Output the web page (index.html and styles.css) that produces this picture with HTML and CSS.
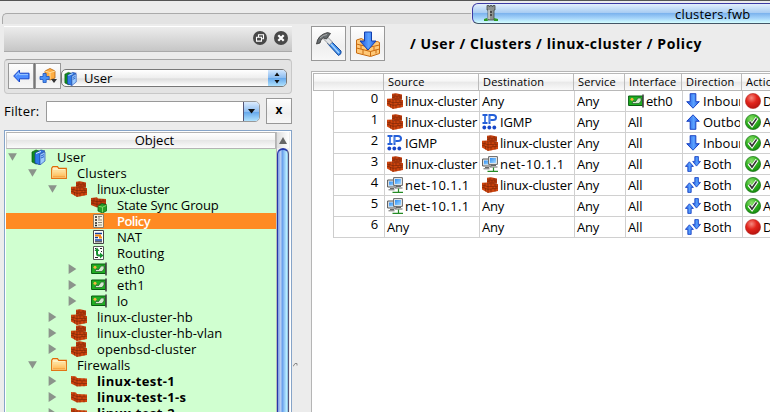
FILE: index.html
```html
<!DOCTYPE html>
<html lang="en"><head><meta charset="utf-8"><title>clusters.fwb</title><link rel="stylesheet" href="styles.css"></head>
<body>
<svg class="defs" width="0" height="0"><defs>
<linearGradient id="blue" x1="0" x2="1"><stop offset="0" stop-color="#1c52dc"/><stop offset=".55" stop-color="#5ba2ff"/><stop offset="1" stop-color="#1d55df"/></linearGradient>
<linearGradient id="gold" x1="0" y1="0" x2="0" y2="1"><stop offset="0" stop-color="#ffe2a0"/><stop offset=".7" stop-color="#ffc366"/><stop offset="1" stop-color="#f08a1c"/></linearGradient>
<linearGradient id="screen" x1="0" y1="0" x2="1" y2="1"><stop offset="0" stop-color="#2b8cf4"/><stop offset="1" stop-color="#a8dcff"/></linearGradient>
<radialGradient id="red" cx=".4" cy=".3" r=".7"><stop offset="0" stop-color="#f58a80"/><stop offset=".5" stop-color="#e2251c"/><stop offset="1" stop-color="#b81410"/></radialGradient>
<radialGradient id="green" cx=".4" cy=".3" r=".7"><stop offset="0" stop-color="#8be06c"/><stop offset=".6" stop-color="#2fb01e"/><stop offset="1" stop-color="#178a10"/></radialGradient>
<symbol id="book" viewBox="0 0 16 16"><path d="M1 3l4-2 3 1v12l-3 1-4-2z" fill="#108a20" stroke="#075c10" stroke-width=".7"/><path d="M4 4l6-3 4 1-5 3v11l-5-2z" fill="#2f7be8" stroke="#1c3f9c" stroke-width=".7"/><path d="M9 5l5-2v9l-5 4z" fill="#9ccbff" stroke="#2450b0" stroke-width=".7"/><path d="M10 7l3-1.4M10 9l3-1.4" stroke="#2a62c8"/><path d="M5 4.5l5-2" stroke="#d8ebff"/></symbol>
<symbol id="folder" viewBox="0 0 16 16"><path d="M.7 13.3V3.2l1.2-1.5h4.6l1.2 1.6h7.6v10z" fill="#fff0c0" stroke="#e06a08" stroke-width="1.2"/><path d="M1.5 5.5h13v7.2h-13z" fill="url(#gold)" stroke="#fbd68c" stroke-width=".6"/></symbol>
<symbol id="wall" viewBox="0 0 16 12"><path d="M0 1l5 .5 1 1.5 10 .5V11l-10 .5-6-3z" fill="#d0450c"/><path d="M0 3.5l6 2 10 .5M0 6l6 2.4 10 .1M3 1.2v3M9 3.5v2.2M13 3.4v2.4M2 4.5V7M11 6v2.5M4 7v3M9 8.4v3M13 8.4v3M6 3v8.4" fill="none" stroke="#76240a" stroke-width=".6"/></symbol>
<symbol id="cluster" viewBox="0 0 16 16"><path d="M5 .8l4-.6 6 1.3v5l-6 1-4-1.5z" fill="#c5400e"/><path d="M5 2.7l4 .6 6-.4M5 4.4l4 1 6-.5M8 .6v2.5M12 1v2.2M10 3.2V5M13 3v2M7 3v2" fill="none" stroke="#782508" stroke-width=".6"/><path d="M0 5.8l5-.4 1 1 10 .6v7l-10 2-6-3.5z" fill="#d0450e"/><path d="M0 8l6 1.7 10-.6M0 10.3l6 2 10-1.2M6 6.5V16M3 6v2.8M2 8.6V11M9 7v2.4M13 7v2.3M11 9.4v2.4M14 9v2.2M9 12v3.3M13 11.6v3M3.5 11.4v3M5 6.6l10 .4" fill="none" stroke="#702207" stroke-width=".6"/></symbol>
<symbol id="group" viewBox="0 0 16 16"><path d="M0 1l6-.7 1 1.2 8 .4v7l-9 1.5L0 8z" fill="#c03c0d"/><path d="M0 3.5l6 1.1 9-.6M0 6l6 1.3 9-.6M3 1v3M9 2v2.2M12 2v2M2 4v2.3M6 2v8M10 4v3" fill="none" stroke="#702207" stroke-width=".6"/><path d="M7 9l4-2.5L16 8v5.5L11.5 16 7 14z" fill="#28a028" stroke="#08631a" stroke-width=".8"/><path d="M7.5 9.2l4 1 4-1.8M11.5 10.2v5" stroke="#9be47c" fill="none" stroke-width=".8"/></symbol>
<symbol id="policy" viewBox="0 0 16 16"><path d="M2.5 1.5h10v13h-10z" fill="#f6f1df" stroke="#8c7d66"/><path d="M4 4h2M4 7h2M4 10h2M4 12.5h2" stroke="#222" stroke-width="1.5"/><path d="M7 3.5h4M7 5h2M7 7h4M7 9.5h4M7 12h4" stroke="#8f8678"/></symbol>
<symbol id="nat" viewBox="0 0 16 16"><path d="M2.5 1.5h10v13h-10z" fill="#fff" stroke="#444"/><path d="M4 4.5h7M4 8.5h3M4 11h7" stroke="#123d9c" stroke-width="1.5"/><path d="M4 6.5h6M8 8.5h3" stroke="#f28a18" stroke-width="1.8"/><path d="M4 12.8h7" stroke="#222"/></symbol>
<symbol id="route" viewBox="0 0 16 16"><path d="M2.5 1.5h10v13h-10z" fill="#fff" stroke="#555"/><path d="M4 3.5h1M9 3.5h2M4 12.5h3M10 6.5h1" stroke="#222"/><path d="M6 4v4.5q0 2 2 2h2" fill="none" stroke="#159030" stroke-width="2"/><path d="M3.5 6L6 2.5 8.5 6zM9 7.5l3.5 3L9 13.5z" fill="#159030"/></symbol>
<symbol id="nic" viewBox="0 0 16 13"><path d="M.6 1.5h14v9.5H.6z" fill="#1faf22" stroke="#075c10"/><path d="M15 0v13" stroke="#444" stroke-width="1.6"/><path d="M2.5 4.5h2l1 2M8 6.5l2-3h3v3L11 9H4l1-2h3" fill="#d5e9cf" stroke="#245d29" stroke-width=".7"/><circle cx="4" cy="4.7" r="1.5" fill="#f5b83a"/></symbol>
<symbol id="ip" viewBox="0 0 16 16"><path d="M.5 1h5M3 1v8M.5 9h5M7.5 10V1H11q3 0 3 2.5T11 6H8" fill="none" stroke="#245fd8" stroke-width="2"/><path d="M3 2v6M8 2v6" stroke="#9cc6ff" stroke-width=".7"/><g fill="#1746c8"><circle cx="2.3" cy="13.5" r="1.9"/><circle cx="7.3" cy="13.5" r="1.9"/><circle cx="12.3" cy="13.5" r="1.9"/></g></symbol>
<symbol id="net" viewBox="0 0 16 16"><path d="M.6 3h9v7h-9z" fill="#eee" stroke="#555"/><path d="M2 4.5h6v4H2z" fill="url(#screen)"/><path d="M3 11.5h4M1.5 12.8h6" stroke="#666"/><path d="M6.6.6h8.8v7.8H6.6z" fill="#eef2f5" stroke="#666"/><path d="M8 2h6v5H8z" fill="url(#screen)"/><path d="M9 9.5h5M7.5 11h8" stroke="#666" stroke-width="1.2"/><path d="M11.5 11.5v3.8M5.5 15.3H16" stroke="#258b25" stroke-width="1.2"/></symbol>
<symbol id="down" viewBox="0 0 12 14"><path d="M3.5.6h5v7h3L6 13.3.5 7.6h3z" fill="url(#blue)" stroke="#123bc0" stroke-width=".8"/></symbol>
<symbol id="up" viewBox="0 0 12 14"><path d="M3.5 13.4h5v-7h3L6 .7.5 6.4h3z" fill="url(#blue)" stroke="#123bc0" stroke-width=".8"/></symbol>
<symbol id="both" viewBox="0 0 16 16"><path d="M2.8 15.4h3.4v-5h2.2L4.4 5.8.4 10.4h2.4z" fill="url(#blue)" stroke="#123bc0" stroke-width=".8"/><path d="M9.8.6h3.6v4.8h2.1l-4 4.7-3.8-4.7h2.1z" fill="url(#blue)" stroke="#123bc0" stroke-width=".8"/></symbol>
<symbol id="deny" viewBox="0 0 16 16"><circle cx="8" cy="8" r="7.6" fill="url(#red)" stroke="#b42a24" stroke-width=".6"/></symbol>
<symbol id="accept" viewBox="0 0 16 16"><circle cx="8" cy="8" r="7.6" fill="url(#green)" stroke="#187016" stroke-width=".7"/><path d="M4 7.5L7 11l5-7" fill="none" stroke="#fff" stroke-width="3.6"/><path d="M4.5 7.5L7 11l4.6-6.6" fill="none" stroke="#333" stroke-width="1.6"/></symbol>
</defs></svg>
<div class="app">
 <div class="topbar">
  <div class="strip"></div>
  <div class="tab"><svg class="castle" width="14" height="17" viewBox="0 0 14 17"><path d="M3 .5h2v1h1v-1h2v1h1v-1h2V5h-1v10H4V5H3z" fill="#8d9290" stroke="#444c4a" stroke-width=".8"/><path d="M5 5v9" stroke="#d8dcda" stroke-width="1.3"/><path d="M6 7h2M6 10h2" stroke="#333" stroke-width="1.5"/><path d="M0 14l3-1 1 3H0zM10 13l4 1v2h-4z" fill="#2f9a22"/></svg><span>clusters.fwb</span></div>
 </div>
 <div class="main">
  <aside class="side">
   <div class="titlebar">
    <svg width="14" height="14" viewBox="0 0 14 14"><circle cx="7" cy="7" r="7" fill="#484848"/><path d="M5.5 6V3.8h5v4H8.8M3.5 6.3h5v3.8h-5z" fill="none" stroke="#fff" stroke-width="1.1"/></svg>
    <svg width="14" height="14" viewBox="0 0 14 14"><circle cx="7" cy="7" r="7" fill="#484848"/><path d="M4.3 4.3l5.4 5.4M9.7 4.3L4.3 9.7" stroke="#fff" stroke-width="2.2"/></svg>
   </div>
   <div class="nav">
    <div class="btn back"><svg width="17" height="14" viewBox="0 0 17 14"><path d="M.7 7L6.5 1v3.2H16v5.6H6.5V13z" fill="#4d8dff" stroke="#1745c8"/><path d="M3 6.4L6 3.7v1.9h9" fill="none" stroke="#9cc8ff"/></svg></div>
    <div class="btn"><svg width="19" height="16" viewBox="0 0 19 16"><path d="M6 3l5-2.5L16 3v7l-5 2-5-2z" fill="#ffae42" stroke="#b5630c" stroke-width=".8"/><path d="M6 3l5 1.6L16 3M11 5v6" stroke="#ffdc9a" fill="none"/><path d="M4 5.5h3.2v3h3v3h-3v3H4v-3H1v-3h3z" fill="#4b91f5" stroke="#1d54bd" stroke-width=".8"/><path d="M12 11h6l-3 4z" fill="#333"/></svg></div>
    <div class="select"><svg width="14" height="15"><use href="#book"/></svg><span>User</span><i><svg width="8" height="12" viewBox="0 0 8 12"><path d="M4 .5L6.5 4h-5zM4 11.5L6.5 8h-5z" fill="#111"/></svg></i></div>
   </div>
   <div class="filter"><label>Filter:</label><div class="combo"><i><svg width="8" height="5"><path d="M0 0h7L3.5 4.5z" fill="#111"/></svg></i></div><div class="btn clear">x</div></div>
   <div class="tree">
    <div class="list">
     <div class="thead">Object</div>
     <div class="row l0"><b class="open"></b><svg><use href="#book"/></svg><span>User</span></div>
     <div class="row l1"><b class="open"></b><svg><use href="#folder"/></svg><span>Clusters</span></div>
     <div class="row l2"><b class="open"></b><svg><use href="#cluster"/></svg><span class="tight">linux-cluster</span></div>
     <div class="row l3"><b></b><svg><use href="#group"/></svg><span class="tight">State Sync Group</span></div>
     <div class="row l3 sel"><b></b><svg><use href="#policy"/></svg><span>Policy</span></div>
     <div class="row l3"><b></b><svg><use href="#nat"/></svg><span class="tight">NAT</span></div>
     <div class="row l3"><b></b><svg><use href="#route"/></svg><span>Routing</span></div>
     <div class="row l3"><b class="shut"></b><svg><use href="#nic"/></svg><span>eth0</span></div>
     <div class="row l3"><b class="shut"></b><svg><use href="#nic"/></svg><span>eth1</span></div>
     <div class="row l3"><b class="shut"></b><svg><use href="#nic"/></svg><span>lo</span></div>
     <div class="row l2"><b class="shut"></b><svg><use href="#cluster"/></svg><span>linux-cluster-hb</span></div>
     <div class="row l2"><b class="shut"></b><svg><use href="#cluster"/></svg><span>linux-cluster-hb-vlan</span></div>
     <div class="row l2"><b class="shut"></b><svg><use href="#cluster"/></svg><span>openbsd-cluster</span></div>
     <div class="row l1"><b class="open"></b><svg><use href="#folder"/></svg><span>Firewalls</span></div>
     <div class="row l2 bold"><b class="shut"></b><svg><use href="#wall"/></svg><span>linux-test-1</span></div>
     <div class="row l2 bold"><b class="shut"></b><svg><use href="#wall"/></svg><span>linux-test-1-s</span></div>
     <div class="row l2 bold"><b class="shut"></b><svg><use href="#wall"/></svg><span>linux-test-2</span></div>
    </div>
    <div class="scroll"><div class="arrow"></div><div class="thumb"></div></div>
   </div>
  </aside>
  <div class="splitter"><svg width="5" height="4"><path d="M0 3.5l2-3h2v2" fill="none" stroke="#888"/></svg></div>
  <section class="work">
   <div class="tools">
    <div class="btn big"><svg width="28" height="28" viewBox="0 0 28 28"><path d="M12.500 13.500l3-3L26 21q1 3-2.500 4.500z" fill="#3d8be8" stroke="#164a9c"/><path d="M16 14l8 9" stroke="#a6d5ff" stroke-width="1.500"/><path d="M8.500 9l3-3 6 6-3 3z" fill="#e2e5e8" stroke="#888" stroke-width=".8"/><path d="M1.500 14q1-9 11-11.500l3 1-4 5.500-3-1q-3 1-3.500 5z" fill="#666c6f" stroke="#333" stroke-width=".8"/><path d="M5 8q3-3 7-3.500" stroke="#aaa" fill="none"/></svg></div>
    <div class="btn big"><svg width="28" height="28" viewBox="0 0 28 28"><path d="M2.500 10l5-1.500 6 4 10-1 2 1v11l-9 3-14-3.500z" fill="#ffc877" stroke="#c86a10"/><path d="M2.500 14l8 2 6 1 9-2M2.500 18l8 2 6 1.500 9-2.500M7 15v4M11 16v-4M13 17v4M20 17v3.500M9 20v4M16.500 21.500V26M22 19.500v4" fill="none" stroke="#c86a10"/><path d="M10.500 2h7v9h4.500L14 20 6 11h4.500z" fill="url(#blue)" stroke="#123fae"/></svg></div>
    <h1>/ User / Clusters / linux-cluster / Policy</h1>
   </div>
   <div class="sheet">
    <div class="hrow"><div></div><div>Source</div><div>Destination</div><div>Service</div><div>Interface</div><div>Direction</div><div>Action</div></div>
    <div class="grid">
     <div class="r"><em>0</em><div><svg><use href="#cluster"/></svg>linux-cluster</div><div>Any</div><div>Any</div><div><svg><use href="#nic"/></svg>eth0</div><div class="dir"><svg><use href="#down"/></svg><span>Inbound</span></div><div><svg><use href="#deny"/></svg>Deny</div></div>
     <div class="r"><em>1</em><div><svg><use href="#cluster"/></svg>linux-cluster</div><div><svg><use href="#ip"/></svg>IGMP</div><div>Any</div><div>All</div><div class="dir"><svg><use href="#up"/></svg><span>Outbound</span></div><div><svg><use href="#accept"/></svg>Accept</div></div>
     <div class="r"><em>2</em><div><svg><use href="#ip"/></svg>IGMP</div><div><svg><use href="#cluster"/></svg>linux-cluster</div><div>Any</div><div>All</div><div class="dir"><svg><use href="#down"/></svg><span>Inbound</span></div><div><svg><use href="#accept"/></svg>Accept</div></div>
     <div class="r"><em>3</em><div><svg><use href="#cluster"/></svg>linux-cluster</div><div class="num"><svg><use href="#net"/></svg>net-10.1.1</div><div>Any</div><div>All</div><div class="dir"><svg><use href="#both"/></svg><span>Both</span></div><div><svg><use href="#accept"/></svg>Accept</div></div>
     <div class="r"><em>4</em><div class="num"><svg><use href="#net"/></svg>net-10.1.1</div><div><svg><use href="#cluster"/></svg>linux-cluster</div><div>Any</div><div>All</div><div class="dir"><svg><use href="#both"/></svg><span>Both</span></div><div><svg><use href="#accept"/></svg>Accept</div></div>
     <div class="r"><em>5</em><div class="num"><svg><use href="#net"/></svg>net-10.1.1</div><div>Any</div><div>Any</div><div>All</div><div class="dir"><svg><use href="#both"/></svg><span>Both</span></div><div><svg><use href="#accept"/></svg>Accept</div></div>
     <div class="r"><em>6</em><div>Any</div><div>Any</div><div>Any</div><div>All</div><div class="dir"><svg><use href="#both"/></svg><span>Both</span></div><div><svg><use href="#deny"/></svg>Deny</div></div>
    </div>
   </div>
  </section>
 </div>
</div>
</body></html>
```
FILE: styles.css
```css
* { box-sizing: border-box; }
body { margin: 0; font: 13px/16px "Open Sans", "Noto Sans", sans-serif; color: #000; background: #ececec; overflow: hidden; white-space: nowrap; }
svg { display: block; flex: none; }
.defs { position: absolute; }
.app { width: 770px; height: 412px; overflow: hidden; display: flex; flex-direction: column; border-top: 1px solid #555; }
.topbar { height: 24px; flex: none; display: flex; padding-left: 2px; }
.strip { margin-top: 12px; width: 469px; flex: none; height: 11px; border: solid #aaa; border-width: 1px 0 0 1px; border-radius: 5px 0 0 0; background: #e3e3e3; }
.tab { margin: 2px 0 0 1px; width: 483px; flex: none; height: 21px; border: 1px solid #3b3aa5; border-bottom-color: #456; border-radius: 6px; background: linear-gradient(#e3effc 0, #a9cdf3 45%, #7db4ee 50%, #a5d4fa 75%, #d5ffff 100%); display: flex; align-items: center; padding-left: 11px; }
.tab span { margin-left: 177px; letter-spacing: .2px; }
.main { flex: 1; display: flex; padding-left: 4px; min-height: 0; }
.side { width: 288px; display: flex; flex-direction: column; flex: none; }
.titlebar { margin-top: 1px; height: 26px; flex: none; border-bottom: 1px solid #aaa; border-top: 1px solid #fff; background: linear-gradient(#ececec, #c6c6c6); display: flex; justify-content: flex-end; gap: 7px; padding: 4px 4px 0 0; }
.nav { margin-top: 7px; height: 35px; flex: none; border: 1px solid #c8c8c8; border-top: 1px solid #a5a5a5; border-radius: 4px; background: #e3e3e3; display: flex; padding: 3px; }
.btn { width: 26px; height: 26px; flex: none; border: 1px solid #989898; background: linear-gradient(#fefefe, #efefef 60%, #f7f7f7); display: flex; align-items: center; justify-content: center; }
.back { margin-right: 1px; box-shadow: 1px 0 #777; }
.select { margin-top: 6px; width: 226px; height: 18px; border: 1px solid #777; border-radius: 5px; background: linear-gradient(#fff, #eee 50%, #ddd 55%, #fff); display: flex; align-items: center; padding-left: 2px; overflow: hidden; }
.select span { margin-left: 6px; flex: 1; }
.select i, .combo i { width: 18px; height: 18px; background: linear-gradient(#dcecff, #8bbcf0 50%, #67a9ec 52%, #b8e8ff); display: flex; align-items: center; justify-content: center; }
.filter { margin-top: 4px; height: 26px; flex: none; display: flex; align-items: center; }
.filter label { width: 42px; letter-spacing: .2px; }
.combo { width: 214px; height: 21px; margin-right: 6px; border: 1px solid #999; border-radius: 0 5px 5px 0; background: #fff; display: flex; justify-content: flex-end; overflow: hidden; }
.combo i { width: 16px; height: 20px; border-left: 1px solid #557; }
.clear { font-size: 12px; font-weight: 700; line-height: 14px; padding-bottom: 2px; }
.tree { margin-top: 6px; flex: 1; min-height: 0; border: 1px solid #86a4c8; border-bottom: 0; padding: 1px 1px 0; display: flex; background: #fff; overflow: hidden; }
.list { width: 270px; background: #d0ffd0; flex: none; }
.thead { height: 17px; border: 1px solid #b4b4b4; border-left-color: #ccc; background: linear-gradient(#fff, #f3f3f3 45%, #e6e6e6 50%, #fbfbfb); text-align: center; line-height: 15px; padding-left: 27px; }
.row { height: 16px; display: flex; align-items: center; }
.row b { width: 11px; height: 11px; flex: none; margin-left: 1px; }
.row .open { background: #8b948b; clip-path: polygon(10% 15%, 90% 15%, 50% 85%); }
.row .shut { background: #8b948b; clip-path: polygon(15% 5%, 85% 50%, 15% 95%); }
.row svg { width: 16px; height: 16px; margin: 0 10px 0 13px; }
.row span { letter-spacing: .08px; }
.row .tight { letter-spacing: -.15px; }
.l1 { padding-left: 20px; }
.l2 { padding-left: 40px; }
.l3 { padding-left: 60px; }
.sel { background: #ff8a22; color: #fff; font-weight: 600; }
.sel span { letter-spacing: -.6px; }
.bold { font-weight: 700; }
.bold span { letter-spacing: .35px; }
.scroll { flex: 1; display: flex; flex-direction: column; background: #eee; border-left: 1px solid #bbb; padding-right: 1px; }
.arrow { height: 16px; background: linear-gradient(90deg, #ddd, #fff); display: flex; justify-content: center; align-items: center; }
.arrow::before { content: ""; border: 4px solid transparent; border-top: 0; border-bottom: 7px solid #666; }
.thumb { flex: 1; border: solid #2538a8; border-width: 2px 1px 0 1px; border-right-color: #557; border-radius: 7px 7px 0 0; background: linear-gradient(90deg, #7d9ce0, #b5cdf2 25%, #6ba2ec 45%, #8cc0f5 60%, #b5ecff 85%, #86b6dc); }
.splitter { width: 19px; flex: none; display: flex; align-items: center; padding: 292px 0 0 1px; }
.work { flex: 1; min-width: 0; display: flex; flex-direction: column; }
.tools { height: 46px; flex: none; display: flex; padding-top: 1px; gap: 4px; }
.big { width: 35px; height: 35px; }
h1 { margin: 10px 0 0 21px; font-size: 14px; line-height: 16px; font-weight: 700; letter-spacing: .6px; }
.sheet { flex: 1; border: solid #b5b5b5; border-width: 1px 0 0 1px; background: #fff; padding: 1px 0 0 1px; }
.hrow { display: grid; grid-template-columns: 70px 95px 95px 51px 57px 60px 60px; height: 18px; border: solid #b8b8b8; border-width: 1px 0 1px 1px; background: linear-gradient(#fff, #f6f6f6 45%, #e8e8e8 50%, #fafafa); font-size: 11px; line-height: 16px; letter-spacing: .2px; overflow: hidden; margin-right: -20px; }
.hrow div { border-right: 1px solid #bbb; padding-left: 4px; }
.grid { margin-left: 20px; border-left: 1px solid #ccc; }
.r { display: grid; grid-template-columns: 51px 95px 95px 51px 57px 60px 60px; height: 21px; }
.r > * { border: solid #d0d0d0; border-width: 0 1px 1px 0; display: flex; align-items: center; padding-left: 2px; overflow: hidden; font-style: normal; letter-spacing: -.18px; }
.r .num { letter-spacing: .4px; }
.r em { justify-content: flex-end; align-items: flex-start; padding-right: 6px; line-height: 15px; }
.r svg { width: 16px; height: 16px; margin-right: 2px; }
.r .dir { letter-spacing: 0; }
.dir span { overflow: hidden; margin: 0 2px 0 0; }
```
